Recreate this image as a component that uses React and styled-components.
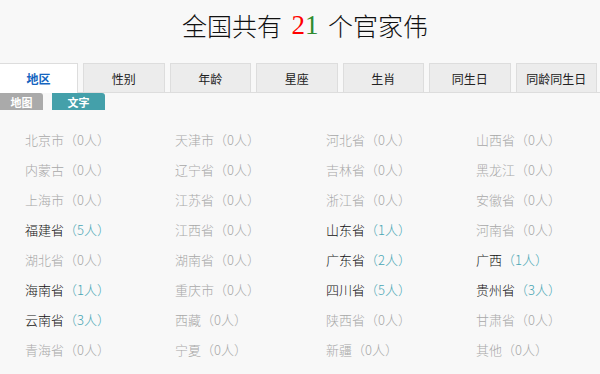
import styled, { createGlobalStyle } from "styled-components";

const GlobalStyle = createGlobalStyle`
  html, body {
    margin: 0;
    padding: 0;
    background: #f8f8f8;
    font-family: "Noto Sans CJK SC", "Liberation Sans", sans-serif;
  }
`;

const tabs = ["地区", "性别", "年龄", "星座", "生肖", "同生日", "同龄同生日"];

const regions = [
  ["北京市", 0], ["天津市", 0], ["河北省", 0], ["山西省", 0],
  ["内蒙古", 0], ["辽宁省", 0], ["吉林省", 0], ["黑龙江", 0],
  ["上海市", 0], ["江苏省", 0], ["浙江省", 0], ["安徽省", 0],
  ["福建省", 5], ["江西省", 0], ["山东省", 1], ["河南省", 0],
  ["湖北省", 0], ["湖南省", 0], ["广东省", 2], ["广西", 1],
  ["海南省", 1], ["重庆市", 0], ["四川省", 5], ["贵州省", 3],
  ["云南省", 3], ["西藏", 0], ["陕西省", 0], ["甘肃省", 0],
  ["青海省", 0], ["宁夏", 0], ["新疆", 0], ["其他", 0],
];

function App() {
  return (
    <Page>
      <GlobalStyle />
      <Title>
        全国共有 <Num><Red>2</Red><Green>1</Green></Num> 个官家伟
      </Title>
      <TabBar>
        {tabs.map((t, i) => (
          <Tab key={t} $active={i === 0}>{t}</Tab>
        ))}
      </TabBar>
      <SubTabs>
        <SubTab $w={43} $color="#aaaaaa">地图</SubTab>
        <SubTab $w={53} $color="#44a0aa">文字</SubTab>
      </SubTabs>
      <Grid>
        {regions.map(([name, n]) => (
          <Cell key={name} $on={n > 0}>
            {name}
            <Count $on={n > 0}>（{n}人）</Count>
          </Cell>
        ))}
      </Grid>
    </Page>
  );
}

export default App;

const Page = styled.div`
  width: 600px;
  height: 374px;
  overflow: hidden;
`;

const Title = styled.div`
  padding-left: 10px;
  height: 50px;
  display: flex;
  align-items: center;
  justify-content: center;
  font-size: 25px;
  font-weight: 300;
  color: #111;
  white-space: pre;
`;

const Num = styled.span`
  font-family: "Liberation Serif", serif;
  font-size: 27px;
  margin: 0 4px;
`;
const Red = styled.span`
  color: #ff0000;
`;
const Green = styled.span`
  color: #2e8b2e;
`;

const TabBar = styled.div`
  margin-top: 13px;
  display: flex;
  gap: 5px;
  height: 29px;
  border-bottom: 1px solid #dddddd;
  padding-right: 3px;
`;

const Tab = styled.div`
  flex: ${(p) => (p.$active ? "0 0 78px" : "1")};
  box-sizing: border-box;
  display: flex;
  align-items: center;
  justify-content: center;
  font-size: 12px;
  color: ${(p) => (p.$active ? "#1565c0" : "#222")};
  font-weight: ${(p) => (p.$active ? "bold" : "normal")};
  background: ${(p) => (p.$active ? "#ffffff" : "#ececec")};
  border: 1px solid #dddddd;
  border-bottom: none;
  border-left: ${(p) => (p.$active ? "none" : "1px solid #dddddd")};
  margin-bottom: ${(p) => (p.$active ? "-1px" : "0")};
  height: ${(p) => (p.$active ? "30px" : "29px")};
`;

const SubTabs = styled.div`
  display: flex;
  gap: 9px;
  height: 17px;
`;

const SubTab = styled.div`
  width: ${(p) => p.$w}px;
  background: ${(p) => p.$color};
  color: #fff;
  font-size: 11px;
  font-weight: bold;
  display: flex;
  align-items: center;
  justify-content: center;
  border-radius: 0 3px 0 0;
`;

const Grid = styled.div`
  margin-top: 14px;
  padding-left: 25px;
  display: grid;
  grid-template-columns: 150px 151px 150px 150px;
  grid-auto-rows: 30px;
`;

const Cell = styled.div`
  font-size: 13px;
  font-weight: 300;
  color: ${(p) => (p.$on ? "#111" : "#a8a8a8")};
  display: flex;
  align-items: center;
  white-space: nowrap;
`;

const Count = styled.span`
  color: ${(p) => (p.$on ? "#4aa6b4" : "#a8a8a8")};
`;
